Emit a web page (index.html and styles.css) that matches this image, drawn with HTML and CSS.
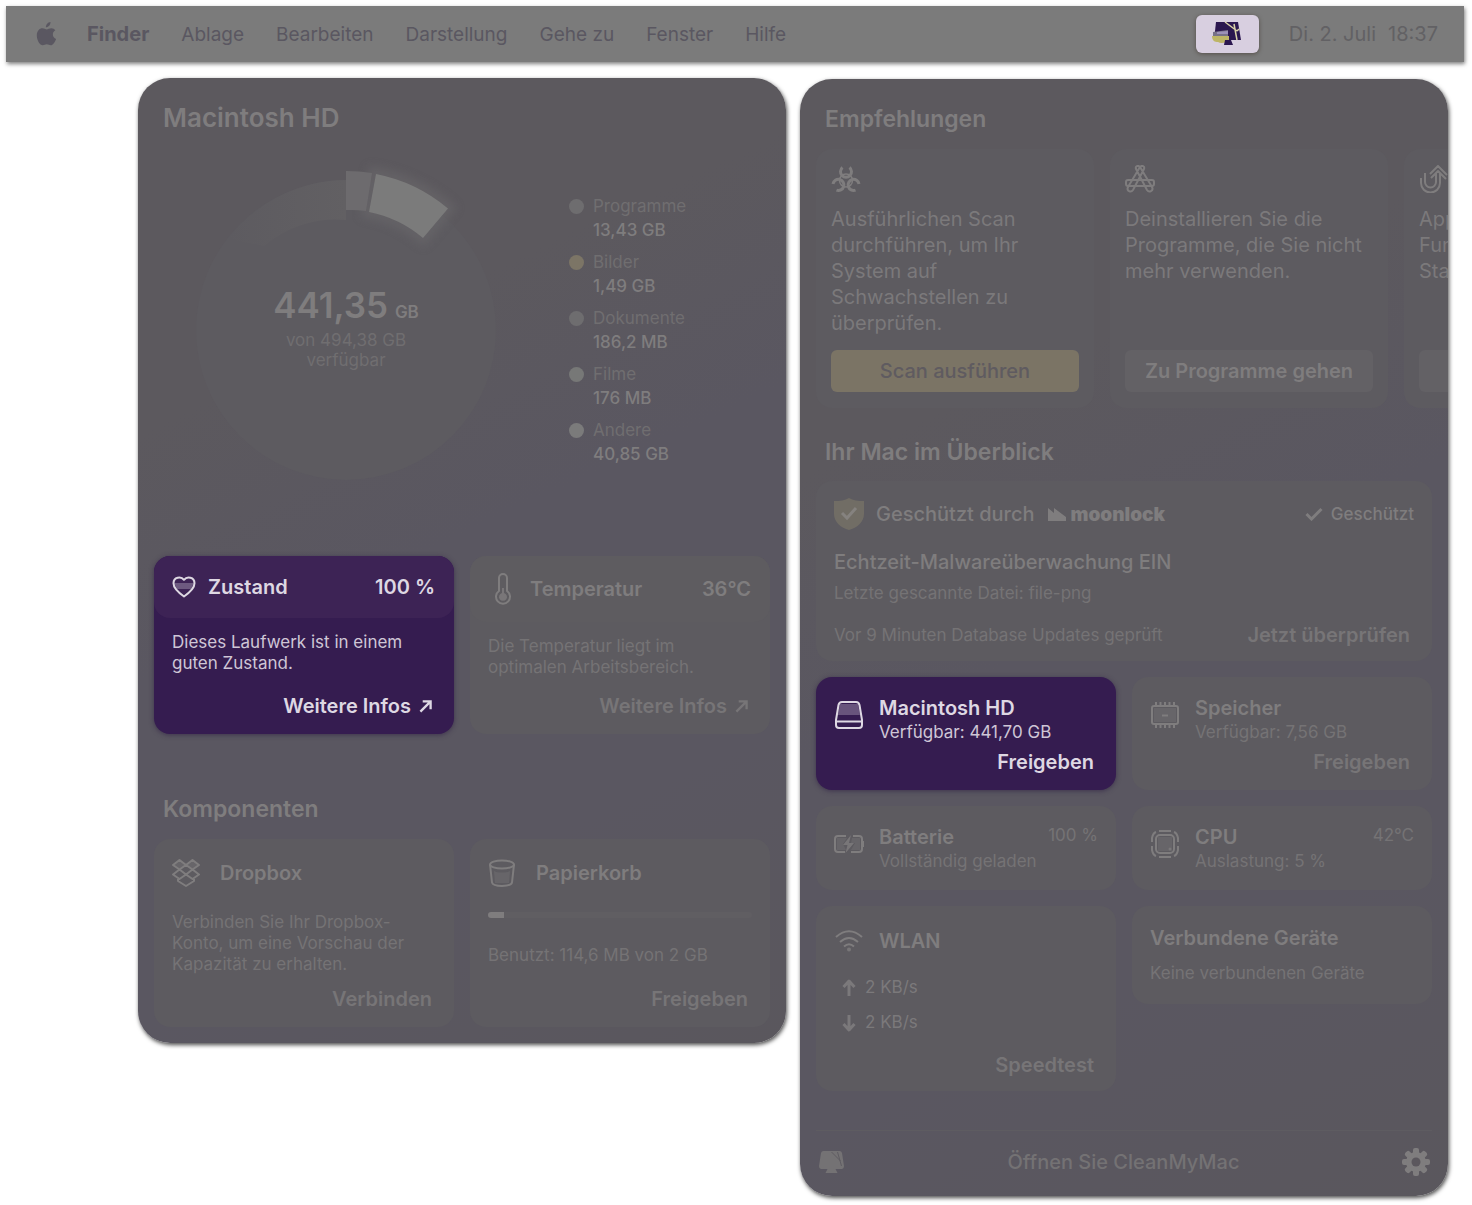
FILE: index.html
```html
<!DOCTYPE html>
<html lang="de">
<head>
  <meta charset="UTF-8"/>
  <meta name="viewport" content="width=device-width,initial-scale=1"/>
  <title>CleanMyMac Menü</title>
  <link rel="stylesheet" href="styles.css">
</head>
<body>
  <!-- Menu bar -->
  <header class="menubar">
    <svg class="apple" viewBox="0 0 20 24" aria-hidden="true">
      <path d="M14 0c.2 2.700-2 5.300-4.600 5.300C9.200 2.700 11.500.300 14 0z"/>
      <path d="M18.800 8.200c-3.700 2.300-3 7.200.800 8.700-1 2.900-3.100 6.300-5.300 6.300-1.600 0-2.200-.9-4-.9s-2.500.9-4 .9C3.300 23.200.300 18 .300 13.400.300 9 3 6.300 5.900 6.300c1.800 0 3.200 1.100 4.300 1.100 1 0 2.700-1.200 4.800-1.200 1.500 0 2.900.700 3.800 2z"/>
    </svg>
    <nav class="menus">
      <button class="app-name">Finder</button>
      <button>Ablage</button>
      <button>Bearbeiten</button>
      <button>Darstellung</button>
      <button>Gehe zu</button>
      <button>Fenster</button>
      <button>Hilfe</button>
    </nav>
    <button class="tray" aria-label="CleanMyMac">
      <svg viewBox="0 0 30 26">
        <path d="M4 1h22l3 18H2z" fill="#2b174f"/>
        <path d="M13 1l12 9M22 3l3 16M25 10l2-2" stroke="#d9d2a8" stroke-width="1.500" fill="none"/>
        <path d="M1 11l15-2v6H1z" fill="#777188"/>
        <path d="M5 11l11-1v3H5z" fill="#9c91b8"/>
        <path d="M0 15h17v4c-3 3-8 4-11 2-3 0-6-1-6-6z" fill="#bdb566"/>
        <path d="M13 19h6l2 5h-9z" fill="#2b174f"/>
      </svg>
    </button>
    <time class="clock"><span>Di. 2. Juli</span><span>18:37</span></time>
  </header>

  <main class="panels">
    <!-- Disk panel -->
    <section class="panel disk">
      <h2 class="disk-title">Macintosh HD</h2>
      <div class="usage">
        <div class="chart">
          <svg viewBox="0 0 320 320" aria-hidden="true">
            <defs>
              <linearGradient id="fade"><stop offset="0" stop-color="#5d5b60"/><stop offset="1" stop-color="#626063"/></linearGradient>
            </defs>
            <circle class="disc" cx="160" cy="160" r="150"/>
            <path fill="url(#fade)" d="M42 69A150 150 0 0 1 160 10V50A110 110 0 0 0 78 76Z"/>
            <path class="arc-glow" d="M188 3.500A159 159 0 0 1 262 38L237 68A120 120 0 0 0 182 42Z"/>
            <path class="arc-apps" d="M160 1A159 159 0 0 1 186 3L180 41A120 120 0 0 0 160 40Z"/>
            <path class="arc-other" d="M190 4A159 159 0 0 1 262 38.500L237 68A120 120 0 0 0 183 42Z"/>
          </svg>
          <div class="chart-label">
            <p class="total">441,35 <small>GB</small></p>
            <p>von 494,38 GB<br>verfügbar</p>
          </div>
        </div>
        <dl class="legend">
          <div class="apps"><dt>Programme</dt><dd>13,43 GB</dd></div>
          <div class="images"><dt>Bilder</dt><dd>1,49 GB</dd></div>
          <div class="docs"><dt>Dokumente</dt><dd>186,2 MB</dd></div>
          <div class="movies"><dt>Filme</dt><dd>176 MB</dd></div>
          <div class="other"><dt>Andere</dt><dd>40,85 GB</dd></div>
        </dl>
      </div>

      <div class="pair">
        <article class="card status active">
          <div class="status-head">
            <svg class="icon heart" viewBox="0 0 24 22"><path class="tint" d="M2 7h20l-3 6H5z"/><path d="M12 20.500C7 17 1.500 12.500 1.500 7.300 1.500 1 9 0 12 3.800c3-3.800 10.500-2.800 10.500 3.500 0 5.200-5.500 9.700-10.500 13.200z"/></svg>
            <h3>Zustand</h3>
            <span class="value">100 %</span>
          </div>
          <p>Dieses Laufwerk ist in einem guten Zustand.</p>
          <button class="action">Weitere Infos <svg class="arrow" viewBox="0 0 14 14"><path d="M1.500 12.500l11-11M4 1.500h8.500V10"/></svg></button>
        </article>
        <article class="card status temp">
          <div class="status-head">
            <svg class="icon thermo" viewBox="0 0 18 32"><path d="M5 5a4 4 0 0 1 8 0v13a7 7 0 1 1-8 0z"/><path class="fill" d="M8 15h2v5a4 4 0 1 1-2 0z"/></svg>
            <h3>Temperatur</h3>
            <span class="value">36°C</span>
          </div>
          <p>Die Temperatur liegt im optimalen Arbeitsbereich.</p>
          <button class="action">Weitere Infos <svg class="arrow" viewBox="0 0 14 14"><path d="M1.500 12.500l11-11M4 1.500h8.500V10"/></svg></button>
        </article>
      </div>

      <h2 class="parts-title">Komponenten</h2>
      <div class="pair">
        <article class="card part">
          <div class="part-head">
            <svg class="icon part-icon" viewBox="0 0 28 28"><path class="tint" d="M7.500 1L14 6 7.500 10.500 1 6zM20.500 1L27 6l-6.500 4.500L14 6z"/><path d="M7.500 1L14 6 7.500 10.500 1 6zM20.500 1L27 6l-6.500 4.500L14 6zM7.500 10.500L14 15.500 7.500 20 1 15.500zM20.500 10.500l6.500 5-6.500 4.500-6.500-4.500zM14 6l6.500 4.500L14 15.500l-6.500-5zM6 20v2l8 5 8-5v-2"/></svg>
            <h3>Dropbox</h3>
          </div>
          <p>Verbinden Sie Ihr Dropbox-Konto, um eine Vorschau der Kapazität zu erhalten.</p>
          <button class="action">Verbinden</button>
        </article>
        <article class="card part">
          <div class="part-head">
            <svg class="icon part-icon" viewBox="0 0 28 28"><ellipse cx="14" cy="5.500" rx="12" ry="4"/><path d="M2 5.500l2 18C5 28 23 28 24 23.500l2-18"/><path class="tint" d="M6 12c4 2 12 2 16 0l-1 12H7z"/></svg>
            <h3>Papierkorb</h3>
          </div>
          <div class="meter" role="progressbar" aria-valuenow="6" aria-label="Papierkorb"><div style="width:6%"></div></div>
          <p>Benutzt: 114,6 MB von 2 GB</p>
          <button class="action">Freigeben</button>
        </article>
      </div>
    </section>

    <!-- Overview panel -->
    <section class="panel overview">
      <h2>Empfehlungen</h2>
      <div class="tips">
        <article class="card tip">
          <svg class="icon" viewBox="0 0 30 28"><g stroke-width="3"><path id="horn" d="M11.500 2.500a5.500 5.500 0 1 0 7 0"/><use href="#horn" transform="rotate(120 15 15.500)"/><use href="#horn" transform="rotate(240 15 15.500)"/></g><circle cx="15" cy="15.500" r="6.500" stroke-width="1.500"/></svg>
          <p>Ausführlichen Scan durchführen, um Ihr System auf Schwachstellen zu überprüfen.</p>
          <button class="tip-btn primary">Scan ausführen</button>
        </article>
        <article class="card tip">
          <svg class="icon" viewBox="0 0 30 28"><rect x="1" y="15" width="28" height="6" rx="2"/><path d="M11 4c-1-3 2-4 4-2l12 20c2 4-3 6-5 3L11 4zM19 4c1-3-2-4-4-2L3 22c-2 4 3 6 5 3L19 4z"/></svg>
          <p>Deinstallieren Sie die Programme, die Sie nicht mehr verwenden.</p>
          <button class="tip-btn">Zu Programme gehen</button>
        </article>
        <article class="card tip">
          <svg class="icon" viewBox="0 0 30 28"><path d="M2 13v5a9.500 9.500 0 0 0 19 0V8M6 8v9a5.500 5.500 0 0 0 11 0V9M17 17V8M11 9l8-8 9 9M12 13l7-7 8 8"/></svg>
          <p>App<br>Fun<br>Sta</p>
          <button class="tip-btn" aria-label="Starten"></button>
        </article>
      </div>

      <h2 class="mac-title">Ihr Mac im Überblick</h2>
      <article class="card protect">
        <div class="protect-head">
          <svg class="shield" viewBox="0 0 30 32"><path d="M15 0c4 2.500 9 3 15 3v13c0 8-7 14-15 16C7 30 0 24 0 16V3c6 0 11-.5 15-3z"/><path class="tick" d="M8 15l5 5 9-10"/></svg>
          <h3>Geschützt durch</h3>
          <span class="brand"><svg viewBox="0 0 18 13"><path d="M0 0l6 5V0l12 9v4H0z"/></svg>moonlock</span>
          <span class="state"><svg viewBox="0 0 18 14"><path d="M1.500 7l5 5L16.500 2"/></svg>Geschützt</span>
        </div>
        <h4>Echtzeit-Malwareüberwachung EIN</h4>
        <p>Letzte gescannte Datei: file-png</p>
        <div class="protect-foot">
          <p>Vor 9 Minuten Database Updates geprüft</p>
          <button class="action">Jetzt überprüfen</button>
        </div>
      </article>

      <div class="pair">
        <article class="card info active">
          <svg class="icon" viewBox="0 0 28 28"><path class="tint" d="M5 3h18l2 11H3z"/><path d="M3.500 4C4 1.500 5 1 7 1h14c2 0 3 .5 3.500 3L27 19v5c0 2-1 3-3 3H4c-2 0-3-1-3-3v-5zM1 20.500h26"/></svg>
          <div class="info-body">
            <h3>Macintosh HD</h3>
            <p>Verfügbar: 441,70 GB</p>
            <button class="action">Freigeben</button>
          </div>
        </article>
        <article class="card info">
          <svg class="icon" viewBox="0 0 28 28"><rect class="tint" x="3" y="7" width="22" height="14"/><rect x="1" y="5" width="26" height="18" rx="2"/><path d="M5 5V1M9.500 5V1M14 5V1M18.500 5V1M23 5V1M5 27v-4M9.500 27v-4M14 27v-4M18.500 27v-4M23 27v-4M11 14.500h6"/></svg>
          <div class="info-body">
            <h3>Speicher</h3>
            <p>Verfügbar: 7,56 GB</p>
            <button class="action">Freigeben</button>
          </div>
        </article>
        <article class="card info short">
          <svg class="icon" viewBox="0 0 30 28"><path d="M12 6H4C2 6 1 7 1 9v10c0 2 1 3 3 3h7M19 6h6c2 0 3 1 3 3v10c0 2-1 3-3 3h-8M29.500 11v6"/><path class="tint" d="M3 8h10l-4 6 3 6H3zM18 8h8v12h-9l4-7h-4z"/><path class="fill" d="M17 5l-8 10h4.500l-2 8L20 13h-5z"/></svg>
          <div class="info-body">
            <div class="info-head"><h3>Batterie</h3><span class="reading">100 %</span></div>
            <p>Vollständig geladen</p>
          </div>
        </article>
        <article class="card info short">
          <svg class="icon" viewBox="0 0 28 28"><rect class="tint" x="7" y="7" width="14" height="14"/><rect x="5" y="5" width="18" height="18" rx="4"/><path d="M8 1h12M8 27h12M1 12V8q1-5 4-6M27 12V8q-1-5-4-6M1 16v4q1 5 4 6M27 16v4q-1 5-4 6"/><circle class="fill" cx="19" cy="19" r="1.500"/></svg>
          <div class="info-body">
            <div class="info-head"><h3>CPU</h3><span class="reading">42°C</span></div>
            <p>Auslastung: 5 %</p>
          </div>
        </article>
        <article class="card wlan">
          <div class="wlan-head">
            <svg class="icon" viewBox="0 0 28 22"><path d="M1 7q13-11.500 26 0M5 12q9-8 18 0M9 16.500q5-4.500 10 0"/><circle class="fill" cx="14" cy="19.500" r="2"/></svg>
            <h3>WLAN</h3>
          </div>
          <p><svg class="icon rate" viewBox="0 0 14 18"><path d="M7 17V2M1.500 8L7 2l5.500 6"/></svg>2 KB/s</p>
          <p><svg class="icon rate" viewBox="0 0 14 18"><path d="M7 1v15M1.500 10L7 16l5.500-6"/></svg>2 KB/s</p>
          <button class="action">Speedtest</button>
        </article>
        <article class="card devices">
          <h3>Verbundene Geräte</h3>
          <p>Keine verbundenen Geräte</p>
        </article>
      </div>

      <footer class="panel-foot">
        <svg class="mac" viewBox="0 0 26 24" aria-hidden="true"><path d="M5 1h16q2 0 2.500 2l2 13c0 2-1 3-2.500 3H3c-1.500 0-2.500-1-2.500-3l2-13Q3 1 5 1zM9 19h8l2 4H7z"/><path class="line" d="M13 2l9 9M19 2l4 14"/></svg>
        <button class="open">Öffnen Sie CleanMyMac</button>
        <button class="gear" aria-label="Einstellungen">
          <svg viewBox="0 0 28 28"><g><rect x="11" y="0" width="6" height="28" rx="2"/><rect x="11" y="0" width="6" height="28" rx="2" transform="rotate(45 14 14)"/><rect x="11" y="0" width="6" height="28" rx="2" transform="rotate(90 14 14)"/><rect x="11" y="0" width="6" height="28" rx="2" transform="rotate(135 14 14)"/><circle cx="14" cy="14" r="10"/></g><circle class="hole" cx="14" cy="14" r="4.500"/></svg>
        </button>
      </footer>
    </section>
  </main>
</body>
</html>
```
FILE: styles.css
```css
/*  BASIC STYLES  */
* { box-sizing: border-box; margin: 0; padding: 0; }
body { background: #fff; font-family: Inter, "Liberation Sans", sans-serif; color: #7f7d7e; padding: 6px 8px 8px 6px; }
button { background: none; border: none; color: inherit; font: inherit; cursor: pointer; }
svg { display: block; flex: none; }
h2 { font-size: 23px; line-height: 28px; font-weight: 600; padding-left: 9px; }
h3 { font-size: 20px; line-height: 24px; font-weight: 600; }
p { font-size: 17px; line-height: 21px; }

/*  MENU BAR  */
.menubar { display: flex; align-items: center; height: 56px; padding: 0 26px 0 30px; background: #7b7b7b; color: #5a5761; font-size: 19px; box-shadow: 1px 2px 4px rgba(0,0,0,.5); }
.apple { width: 21px; height: 24px; margin-right: 30px; fill: #5a5761; }
.menus { display: flex; align-items: center; gap: 32px; flex: 1; }
.app-name { font-size: 20px; font-weight: 700; }
.tray { display: flex; align-items: center; justify-content: center; width: 63px; height: 38px; border-radius: 6px; background: #d8cfe0; box-shadow: 0 1px 4px rgba(60,50,40,.6); }
.tray svg { width: 30px; height: 26px; }
.clock { display: flex; gap: 12px; margin-left: 30px; color: #626164; font-size: 20px; }

/*  PANELS  */
.panels { display: flex; justify-content: flex-end; align-items: flex-start; gap: 14px; padding: 16px 16px 0 0; }
.panel { flex: 0 1 648px; min-width: 0; padding: 26px 16px 16px; border-radius: 32px; background: linear-gradient(155deg, #5c595e 0%, #5c595e 28%, #5a5761 48%, #5a5761 75%, #5a575d 100%); box-shadow: 1px 2px 4px rgba(0,0,0,.7); overflow: hidden; }
.overview { margin-top: 1px; }
.pair { display: grid; grid-template-columns: 1fr 1fr; gap: 16px; align-items: start; }
.card { border-radius: 16px; background: #5d5b60; }
.card p, .reading { color: #757375; }
.action { display: flex; align-items: center; gap: 8px; margin-left: auto; font-size: 20px; line-height: 24px; font-weight: 600; color: #777577; }
.arrow { width: 13px; height: 13px; fill: none; stroke: currentColor; stroke-width: 2.5; }
.icon { width: 28px; height: 28px; fill: none; stroke: currentColor; stroke-width: 2; stroke-linejoin: round; }
.icon .tint { fill: currentColor; opacity: .3; stroke: none; }
.icon .fill { fill: currentColor; stroke: none; opacity: .8; }

/* Highlighted cards */
.card.active { background: #351c50; color: #ded8e3; box-shadow: 0 1px 5px rgba(50,35,70,.7); }
.card.active p { color: #cfc6d6; }
.card.active .action { color: #ded8e3; }

/*  DISK USAGE  */
.disk-title { font-size: 26px; }
.usage { display: flex; gap: 63px; margin: 38px 0 66px 32px; }
.chart { display: grid; place-items: center; width: 320px; height: 320px; }
.chart svg, .chart-label { grid-area: 1 / 1; }
.chart svg { width: 320px; height: 320px; overflow: visible; }
.disc { fill: #5d5b60; }
.arc-glow { fill: none; stroke: #6b696c; stroke-width: 12; opacity: .6; filter: blur(5px); }
.arc-apps { fill: #6d6b6e; }
.arc-other { fill: #7b7b7b; }
.chart-label { text-align: center; padding-bottom: 4px; }
.chart-label p { color: #706e70; line-height: 20px; }
.chart-label .total { color: #7f7d7e; font-size: 35px; line-height: 36px; font-weight: 600; }
.total small { font-size: 17px; margin-left: -2px; }
.legend { padding-top: 24px; }
.legend div { position: relative; padding-left: 24px; margin-bottom: 8px; font-size: 17px; line-height: 24px; }
.legend div::before { content: ""; position: absolute; left: 0; top: 5px; width: 15px; height: 15px; border-radius: 50%; background: #6e6d6f; }
.legend .images::before { background: #7c7566; }
.legend .movies::before { background: #777877; }
.legend .other::before { background: #7b7b7b; }
.legend dt { color: #706e70; }
.legend dd { color: #7f7d7e; font-weight: 500; }

/*  STATUS CARDS  */
.status { padding-bottom: 16px; }
.status-head { display: flex; align-items: center; height: 62px; padding: 0 19px 0 18px; border-radius: 16px; background: #5e5c60; }
.active .status-head { background: #3d2355; }
.status h3 { flex: 1; padding-left: 12px; }
.status .value { font-size: 20px; font-weight: 600; }
.status .heart { width: 24px; height: 22px; }
.status .thermo { width: 30px; height: 32px; }
.status p { padding: 14px 18px 20px; }
.status .action { padding-right: 22px; }
.temp .status-head { height: 66px; }
.temp p { padding-bottom: 16px; }

/*  COMPONENTS  */
.parts-title { margin: 61px 0 16px; }
.part { display: flex; flex-direction: column; height: 188px; padding: 20px 18px 16px; }
.part-head { display: flex; align-items: center; gap: 20px; height: 28px; margin-bottom: 25px; }
.part .action { margin-top: auto; padding-right: 4px; }
.meter { height: 6px; margin-bottom: 27px; border-radius: 3px; background: #605e62; overflow: hidden; }
.meter div { height: 100%; background: #7f7d7e; }

/*  RECOMMENDATIONS  */
.tips { display: grid; grid-template-columns: repeat(3, 278px); gap: 16px; margin: 16px -16px 30px 0; overflow: hidden; }
.tip { display: flex; flex-direction: column; height: 259px; padding: 16px 15px; }
.tip .icon { width: 30px; margin-bottom: 13px; }
.tip p { font-size: 20px; line-height: 26px; color: #7b797b; }
.tip-btn { margin-top: auto; height: 42px; border-radius: 6px; background: #636165; color: #7f7d7e; font-size: 20px; font-weight: 600; }
.tip-btn.primary { background: #7b7465; color: #5f5b60; font-weight: 500; }

/*  PROTECTION CARD  */
.protect { margin: 15px 0 16px; padding: 17px 18px 14px; }
.protect-head { display: flex; align-items: center; height: 32px; margin-bottom: 20px; }
.shield { width: 30px; height: 32px; margin-right: 12px; fill: #716d65; }
.shield .tick { fill: none; stroke: #85827f; stroke-width: 3; }
.brand { display: flex; align-items: center; gap: 5px; margin-left: 13px; font-size: 19px; font-weight: 900; }
.brand svg { width: 18px; height: 13px; fill: currentColor; }
.state { display: flex; align-items: center; gap: 8px; margin-left: auto; font-size: 17px; font-weight: 500; }
.state svg { width: 18px; height: 14px; fill: none; stroke: currentColor; stroke-width: 3; }
.protect h3 { font-weight: 500; }
.protect h4 { margin-bottom: 9px; font-size: 20px; line-height: 24px; font-weight: 500; }
.protect-foot { display: flex; align-items: center; margin-top: 19px; padding-right: 4px; }

/*  INFO CARDS  */
.info { display: flex; gap: 15px; min-height: 113px; padding: 19px 18px 0; }
.info .icon { width: 30px; margin-top: 5px; }
.info-body { flex: 1; min-width: 0; }
.info-body p { line-height: 24px; }
.info-head { display: flex; justify-content: space-between; }
.info .action { margin-top: 6px; padding-right: 4px; }
.info.short { min-height: 84px; }
.reading { font-size: 17px; line-height: 20px; }
.wlan { height: 185px; padding: 23px 18px 0; }
.wlan-head { display: flex; align-items: center; gap: 15px; margin-bottom: 17px; }
.wlan-head .icon { height: 22px; width: 30px; }
.wlan p { display: flex; align-items: center; gap: 9px; height: 35px; padding-left: 8px; color: #7b797b; }
.icon.rate { width: 14px; height: 18px; stroke-width: 3; }
.wlan .action { margin-top: 13px; padding-right: 4px; }
.devices { height: 98px; padding: 20px 18px 0; }
.devices p { margin-top: 13px; }

/*  PANEL FOOTER  */
.panel-foot { display: flex; align-items: center; justify-content: space-between; margin-top: 39px; padding: 17px 2px 4px; border-top: 1px solid #5e5c61; }
.mac { width: 27px; height: 24px; fill: #747274; }
.mac .line { fill: none; stroke: #5f5c62; }
.open { font-size: 20px; font-weight: 500; color: #747274; }
.gear svg { width: 28px; height: 28px; fill: #7f7d7e; }
.gear .hole { fill: #5b575d; }
```
